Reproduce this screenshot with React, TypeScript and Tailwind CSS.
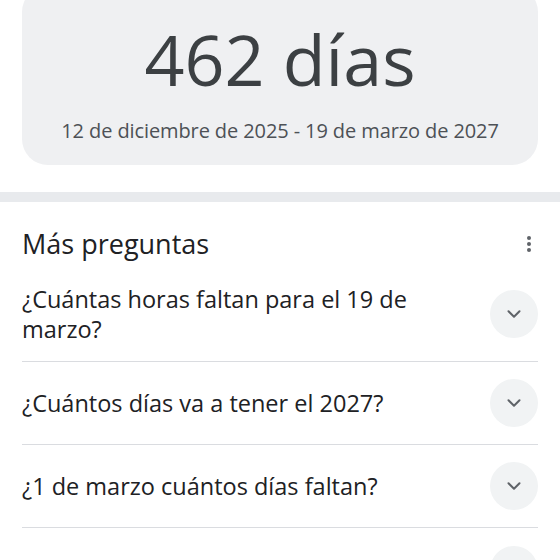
import { ChevronDown } from "lucide-react";

const questions = [
  "¿Cuántas horas faltan para el 19 de marzo?",
  "¿Cuántos días va a tener el 2027?",
  "¿1 de marzo cuántos días faltan?",
  "¿Cuál es el día de la marmota?",
];

export default function App() {
  return (
    <div className="h-[560px] w-[560px] overflow-hidden bg-white font-['Open_Sans',sans-serif]">
      <div className="px-[22px]">
        <div className="mt-[-14px] flex h-[179px] flex-col items-center rounded-[26px] bg-[#eff0f2] pt-[33px]">
          <div className="text-[70px] leading-[80px] text-[#3c4043]">462 días</div>
          <div className="mt-[18px] text-[20px] leading-[28px] tracking-[-0.1px] text-[#4d5156]">
            12 de diciembre de 2025 - 19 de marzo de 2027
          </div>
        </div>
      </div>

      <div className="mt-[27px] h-[10px] bg-[#e8eaed]" />

      <div className="px-[22px] pt-[24px]">
        <div className="flex items-center justify-between">
          <h2 className="text-[27px] leading-[36px] text-[#202124]">Más preguntas</h2>
          <svg width="6" height="18" viewBox="0 0 6 18" className="mr-[6px]">
            <circle cx="3" cy="3" r="2" fill="#5f6368" />
            <circle cx="3" cy="9" r="2" fill="#5f6368" />
            <circle cx="3" cy="15" r="2" fill="#5f6368" />
          </svg>
        </div>

        <div className="mt-[8px]">
          {questions.map((q, i) => (
            <div
              key={q}
              className={`flex items-center justify-between gap-4 ${i < questions.length - 1 ? "border-b border-[#dadce0]" : ""} ${i === 0 ? "h-[92px] pb-[4px]" : "h-[83px]"}`}
            >
              <span className="max-w-[430px] text-[23.5px] leading-[30px] text-[#202124]">{q}</span>
              <span className="flex h-[48px] w-[48px] shrink-0 items-center justify-center rounded-full bg-[#f1f3f4]">
                <ChevronDown size={22} strokeWidth={2.2} color="#5f6368" />
              </span>
            </div>
          ))}
        </div>
      </div>
    </div>
  );
}
